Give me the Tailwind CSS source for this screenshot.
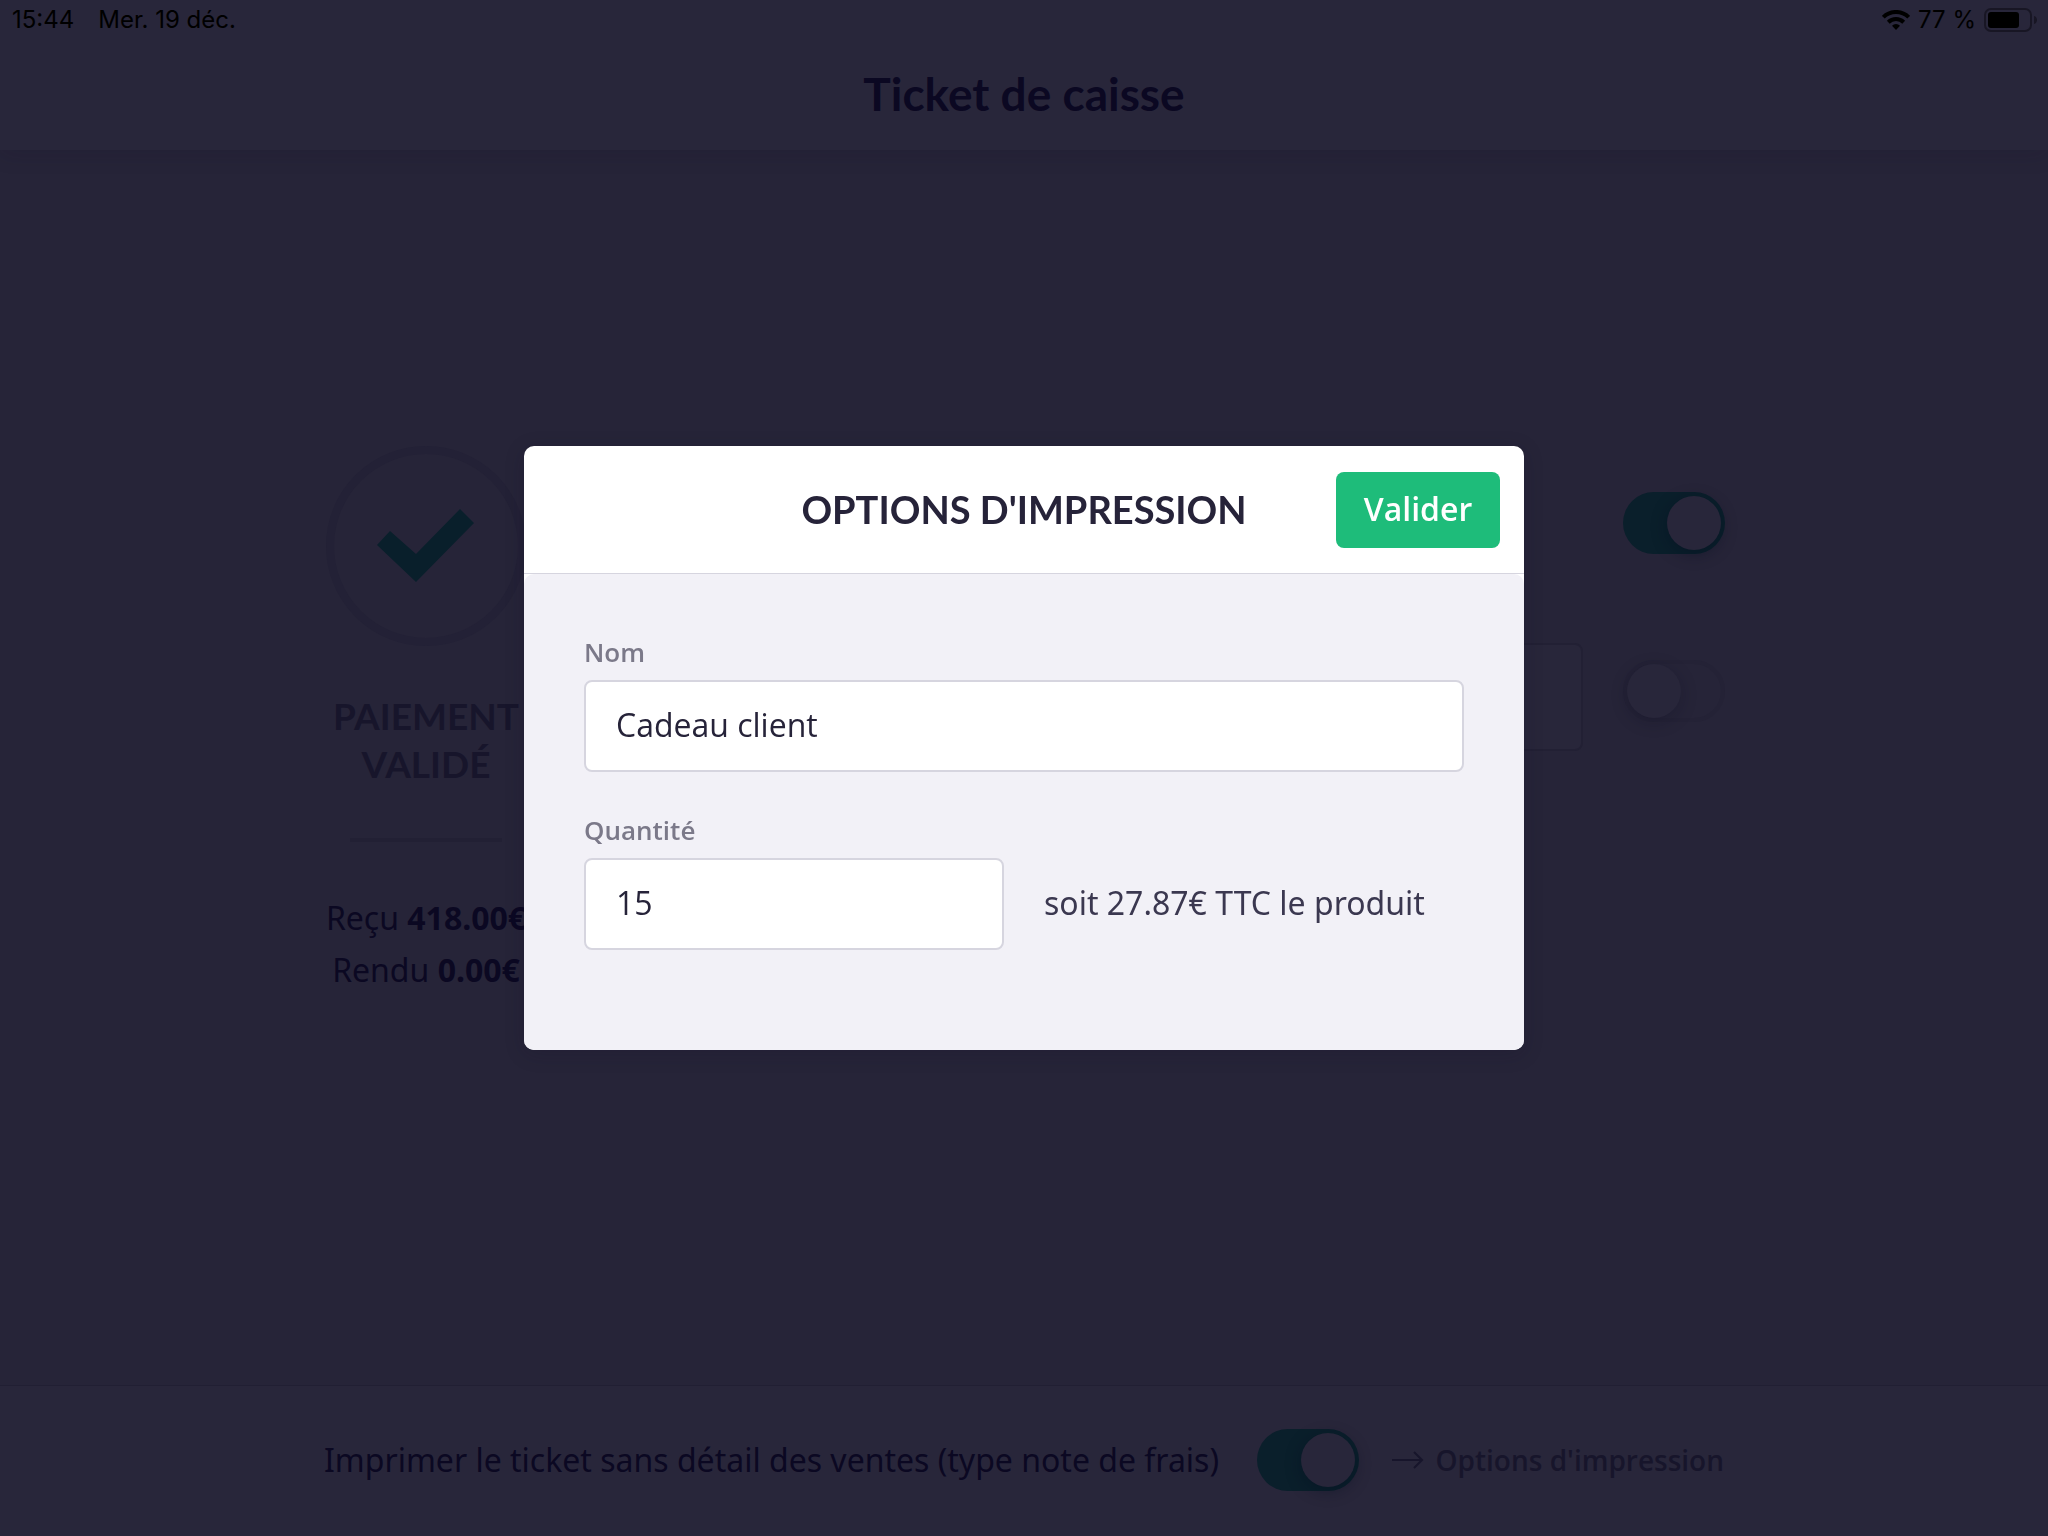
<!doctype html>
<html lang="fr">
  <head>
    <title>Ticket de caisse</title>
    <meta charset="UTF-8" />
    <meta name="viewport" content="width=device-width, initial-scale=1" />
    <script src="https://cdn.jsdelivr.net/npm/@tailwindcss/browser@4"></script>
  </head>
  <body class="bg-[#262438] font-['Open_Sans','Noto_Sans',sans-serif] text-[32px] text-[#0b0822]">
    <div class="min-h-screen flex flex-col">
      <header class="h-[150px] bg-[#28263a] shadow-[0_4px_20px_rgba(20,16,40,0.15)]">
        <div class="h-10 pl-3 pr-[10px] flex items-center justify-between font-['Inter',sans-serif] text-[24px] text-black">
          <div class="flex gap-6">
            <span>15:44</span>
            <span>Mer. 19 déc.</span>
          </div>
          <div class="flex items-center gap-2">
            <svg class="w-7 h-5" viewBox="0 0 28 20" fill="none" stroke="#000" stroke-width="4">
              <path d="M1.3 7.2a18 18 0 0 1 25.4 0" />
              <path d="M6.3 12.2a11 11 0 0 1 15.4 0" />
              <path d="M14 20l-4-4.200a5.600 5.600 0 0 1 8 0z" fill="#000" stroke="none" />
            </svg>
            <span>77 %</span>
            <svg class="w-[54px] h-6" viewBox="0 0 54 24">
              <rect x="1" y="1" width="46" height="22" rx="6" fill="none" stroke="#181624" stroke-width="2" />
              <rect x="4" y="4" width="31" height="16" rx="3" fill="#000" />
              <path d="M50 8c4 1 4 7 0 8z" fill="#181624" />
            </svg>
          </div>
        </div>
        <h1 class="mt-6 text-center font-['Lato',sans-serif] text-[46px] leading-[60px] font-bold">Ticket de caisse</h1>
      </header>

      <main class="flex-1 w-full max-w-[1402px] mx-auto pt-[296px] flex justify-between">
        <section class="w-[206px] flex flex-col items-center whitespace-nowrap">
          <div class="size-[200px] rounded-full border-8 border-[#232136] flex items-center justify-center">
            <svg class="w-[98px] h-[74px]" viewBox="0 0 98 74" fill="#091f2b">
              <path d="M0 36 13 22 39 45 83 0 97 14 39 73z" />
            </svg>
          </div>
          <h2 class="mt-[46px] text-center font-['Lato',sans-serif] text-[37px] leading-12 font-bold text-[#17152b]">PAIEMENT<br />VALIDÉ</h2>
          <hr class="mt-[50px] w-[152px] border-t-4 border-[#222034]" />
          <p class="mt-[50px] text-center font-['Noto_Sans',sans-serif] leading-[52px]">
            Reçu <strong>418.00€</strong><br />
            Rendu <strong>0.00€</strong>
          </p>
        </section>

        <section class="w-[1060px] pt-[46px]">
          <div class="flex justify-end">
            <input type="checkbox" checked aria-label="Imprimer" class="appearance-none w-[102px] h-[62px] rounded-full bg-[#0a1f2b] p-1 flex justify-end before:size-[54px] before:rounded-full before:bg-[#28263a] before:shadow-[0_4px_16px_rgba(4,12,30,0.4)]" />
          </div>
          <div class="mt-[89px] flex items-start gap-10">
            <input type="email" aria-label="Email" class="flex-1 h-[108px] rounded-lg border-2 border-[#222034] bg-[#28263a] px-8" />
            <div class="pt-[17px]">
              <input type="checkbox" aria-label="Envoyer" class="appearance-none w-[102px] h-[62px] rounded-full border-4 border-[#242236] flex before:size-[54px] before:rounded-full before:bg-[#28263a] before:shadow-[0_4px_16px_rgba(12,10,30,0.25)]" />
            </div>
          </div>
        </section>
      </main>

      <footer class="h-[151px] bg-[#28263a] border-t border-[#211f33]">
        <div class="h-full w-full max-w-[1400px] mx-auto pb-[2px] flex items-center">
          <label for="noDetail" class="mr-[38px] font-['Noto_Sans',sans-serif]">Imprimer le ticket sans détail des ventes (type note de frais)</label>
          <input type="checkbox" id="noDetail" checked class="appearance-none w-[102px] h-[62px] rounded-full bg-[#0a1f2b] p-1 flex justify-end before:size-[54px] before:rounded-full before:bg-[#28263a] before:shadow-[0_4px_16px_rgba(4,12,30,0.4)]" />
          <a href="#" class="ml-auto flex items-center gap-3 text-[28px] font-semibold text-[#17152b]">
            <svg class="w-8 h-[18px]" viewBox="0 0 32 18" fill="none" stroke="#17152b" stroke-width="2">
              <path d="M0 9h30M22 1l8 8-8 8" />
            </svg>
            Options d'impression
          </a>
        </div>
      </footer>
    </div>

    <div class="fixed inset-0 pb-10 flex items-center justify-center">
      <form role="dialog" aria-labelledby="dialogTitle" class="w-full max-w-[1000px] rounded-[10px] bg-white text-[#262339] shadow-[0_4px_20px_rgba(20,16,40,0.2)]">
        <div class="h-32 px-6 grid grid-cols-[1fr_auto_1fr] items-center border-b border-[#d6d5df]">
          <h2 id="dialogTitle" class="col-start-2 pb-[2px] font-['Lato',sans-serif] text-[38px] leading-12 font-bold">OPTIONS D'IMPRESSION</h2>
          <button type="button" class="justify-self-end w-[164px] h-[76px] pb-[2px] rounded-lg bg-[#1ebc7a] font-semibold text-white">Valider</button>
        </div>
        <div class="rounded-[10px] bg-[#f2f1f7] px-[60px] pt-[60px] pb-[100px]">
          <label for="nom" class="block mb-[10px] text-[26px] leading-9 font-semibold text-[#7b7989]">Nom</label>
          <input type="text" id="nom" value="Cadeau client" class="w-full h-[92px] rounded-lg border-2 border-[#d6d5df] bg-white px-[30px] pb-1" />
          <label for="quantite" class="block mt-10 mb-[10px] text-[26px] leading-9 font-semibold text-[#7b7989]">Quantité</label>
          <div class="flex items-center gap-10">
            <input type="text" inputmode="numeric" id="quantite" value="15" class="w-[420px] h-[92px] rounded-lg border-2 border-[#d6d5df] bg-white px-[30px] pb-1" />
            <p class="pb-[2px] font-['Noto_Sans',sans-serif] text-[#3b3850]">soit 27.87€ TTC le produit</p>
          </div>
        </div>
      </form>
    </div>
  </body>
</html>
